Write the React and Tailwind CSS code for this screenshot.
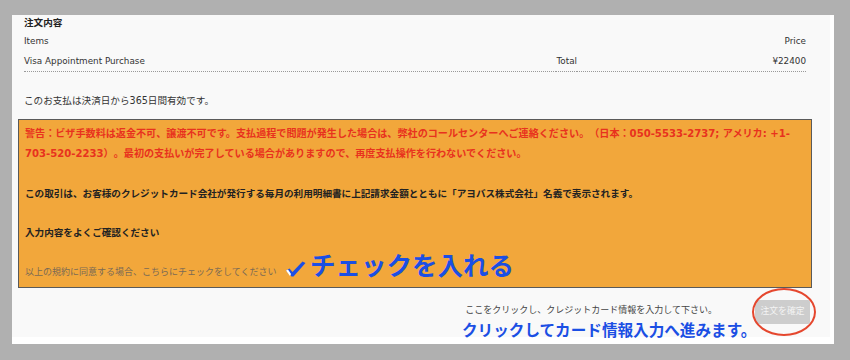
import React from "react"

const font = "font-['DejaVu_Sans','Noto_Sans_CJK_JP',sans-serif] [text-spacing-trim:space-all]"

const CheckMark = () => (
  <svg width="21" height="16" viewBox="0 0 21 16" className="mr-[4px] mt-[11px]">
    <path d="M1 9.5 L4.5 7.5 L7.5 11 L17.5 0.5 L20.5 2 L8.5 15.5 L6.5 15.5 Z" fill="#1b4fe4" />
    <path d="M1 9.5 L3 8.6 L6 13 L5 15 Z" fill="#ffffff" />
  </svg>
)

const App = () => {
  return (
    <div className={`relative w-[850px] h-[360px] bg-[#b0b0b0] pt-[15px] pl-[12px] ${font}`}>
      <div className="w-[822px] h-[329px] bg-white">
        <div className="w-[818px] h-[322px] bg-[#f9f9f9] pl-[6px] pr-[18px]">
          <div className="px-[6px] text-[#333]">
            <h2 className="text-[9.6px] leading-[16px] font-bold text-[#222]">注文内容</h2>
            <div className="mt-[1px] grid grid-cols-[1fr_auto_229px] text-[8.8px]">
              <div className="h-[20px] flex items-center">Items</div>
              <div />
              <div className="h-[20px] flex items-center justify-end">Price</div>
              <div className="h-[20px] flex items-center border-b border-dotted border-[#999]">
                Visa Appointment Purchase
              </div>
              <div className="h-[20px] flex items-center border-b border-dotted border-[#999]">Total</div>
              <div className="h-[20px] flex items-center justify-end border-b border-dotted border-[#999]">
                ¥22400
              </div>
            </div>
            <p className="mt-[19px] text-[9.6px] leading-[20px] text-[#333]">
              このお支払は決済日から365日間有効です。
            </p>
          </div>

          <div className="mt-[8px] border border-[#5a5a5a] bg-[#f2a73b] px-[6px] pt-[4px] pb-[5px] text-[9.6px] leading-[20px]">
            <p className="text-[10.1px] font-bold text-[#e8321e]">
              警告：ビザ手数料は返金不可、譲渡不可です。支払過程で問題が発生した場合は、弊社のコールセンターへご連絡ください。（日本：050-5533-2737; アメリカ: +1-
              <span className="whitespace-nowrap">703-520-2233）。</span>
              最初の支払いが完了している場合がありますので、再度支払操作を行わないでください。
            </p>
            <p className="mt-[20px] font-bold text-[#222]">
              この取引は、お客様のクレジットカード会社が発行する毎月の利用明細書に上記請求金額とともに「アヨバス株式会社」名義で表示されます。
            </p>
            <p className="mt-[19px] font-bold text-[#222]">入力内容をよくご確認ください</p>
            <p className="mt-[19px] text-[9px] text-[#7a6a55]">以上の規約に同意する場合、こちらにチェックをしてください</p>
          </div>

          <div className="mt-[12px] flex items-center justify-end gap-[38px] pr-[2px]">
            <span className="text-[9px] text-[#444] -mt-[3px]">ここをクリックし、クレジットカード情報を入力して下さい。</span>
            <button className="h-[24px] w-[55px] rounded-[2px] bg-[#cdcdcd] text-[8.8px] text-[#f4f4f4]">
              注文を確定
            </button>
          </div>
        </div>
      </div>

      {/* annotations drawn over the screenshot */}
      <div className="absolute left-[285px] top-[250px] flex items-start">
        <CheckMark />
        <span className="text-[25.5px] leading-[28px] font-bold text-[#1b4fe4] font-['Noto_Sans_CJK_JP',sans-serif]">
          チェックを入れる
        </span>
      </div>
      <div className="absolute left-[752px] top-[288px] w-[64px] h-[48px] rounded-[50%] border-[2.5px] border-[#e5472e]" />
      <div className="absolute left-[462px] top-[320px] text-[15.6px] leading-[18px] font-bold text-[#1b4fe4] font-['Noto_Sans_CJK_JP',sans-serif]">
        クリックしてカード情報入力へ進みます。
      </div>
    </div>
  )
}

export default App
